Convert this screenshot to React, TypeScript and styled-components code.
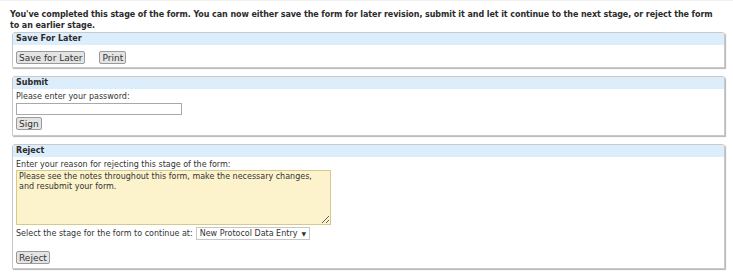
import styled, { createGlobalStyle } from 'styled-components'

const GlobalStyle = createGlobalStyle`
  html, body {
    margin: 0;
    padding: 0;
    background: #ffffff;
  }
  body {
    font-family: "DejaVu Sans", Verdana, sans-serif;
    font-size: 8px;
    color: #333333;
  }
`

const Page = styled.div`
  width: 733px;
  height: 276px;
  box-sizing: border-box;
  padding: 6px 6px 0 10px;
  border-top: 1px solid #f1f1f1;
  display: flex;
  flex-direction: column;
`

const Intro = styled.p`
  max-width: 706px;
  margin: 2px 0 1px;
  font-weight: bold;
  line-height: 11px;
  letter-spacing: -0.08px;
  color: #2b2b2b;
`

const Panel = styled.section`
  margin: 0 2px 8px 2px;
  border: 1px solid #c9c9c9;
  border-radius: 3px 3px 0 0;
  box-shadow: 1px 1px 1px #b5b5b5;
  background: #ffffff;
`

const PanelHeader = styled.h3`
  margin: 0;
  padding: 1px 3px;
  height: 10px;
  line-height: 10px;
  font-size: 8px;
  font-weight: bold;
  color: #2b2b2b;
  background: #dcedfc;
  border-radius: 2px 2px 0 0;
`

const PanelBody = styled.div<{ $pad?: string }>`
  padding: ${p => p.$pad ?? '4px 3px 4px'};
  display: flex;
  flex-direction: column;
  align-items: flex-start;
`

const Row = styled.div<{ $gap?: number }>`
  display: flex;
  align-items: center;
  gap: ${p => p.$gap ?? 14}px;
`

const Label = styled.label`
  display: block;
  line-height: 10px;
`

const Button = styled.button`
  font-family: inherit;
  font-size: 9px;
  color: #333333;
  padding: 1px 2px;
  height: 13px;
  line-height: 10px;
  background: #e4e4e4;
  border: 1px solid #9a9a9a;
  border-radius: 2px;
`

const PasswordInput = styled.input`
  box-sizing: border-box;
  width: 166px;
  height: 12px;
  margin: 1px 0 2px;
  border: 1px solid #a9a9a9;
  padding: 0 2px;
  font-family: inherit;
  font-size: 8px;
`

const Reason = styled.textarea`
  box-sizing: border-box;
  width: 315px;
  height: 55px;
  margin: 0 0 2px;
  padding: 1px 2px;
  resize: both;
  background: #fcf3cc;
  border: 1px solid #d6c98e;
  font-family: inherit;
  font-size: 8px;
  line-height: 10px;
  color: #333333;
`

const StageSelect = styled.div`
  display: inline-flex;
  align-items: center;
  gap: 4px;
  height: 11px;
  padding: 0 3px;
  border: 1px solid #c7c7c7;
  background: #ffffff;
  line-height: 11px;
`

const Caret = styled.span`
  font-size: 6px;
`

const Spacer = styled.div<{ $h: number }>`
  height: ${p => p.$h}px;
`

export default function App() {
  return (
    <>
      <GlobalStyle />
      <Page>
        <Intro>
          You've completed this stage of the form. You can now either save the form for later
          revision, submit it and let it continue to the next stage, or reject the form to an
          earlier stage.
        </Intro>

        <Panel>
          <PanelHeader>Save For Later</PanelHeader>
          <PanelBody $pad="6px 3px 3px">
            <Row>
              <Button>Save for Later</Button>
              <Button>Print</Button>
            </Row>
          </PanelBody>
        </Panel>

        <Panel>
          <PanelHeader>Submit</PanelHeader>
          <PanelBody $pad="3px 3px 5px">
            <Label>Please enter your password:</Label>
            <PasswordInput type="password" />
            <Button>Sign</Button>
          </PanelBody>
        </Panel>

        <Panel>
          <PanelHeader>Reject</PanelHeader>
          <PanelBody $pad="3px 3px 4px">
            <Label>Enter your reason for rejecting this stage of the form:</Label>
            <Reason
              defaultValue={
                'Please see the notes throughout this form, make the necessary changes,\nand resubmit your form.'
              }
            />
            <Row $gap={3}>
              <span>Select the stage for the form to continue at:</span>
              <StageSelect>
                New Protocol Data Entry <Caret>▼</Caret>
              </StageSelect>
            </Row>
            <Spacer $h={11} />
            <Button>Reject</Button>
          </PanelBody>
        </Panel>
      </Page>
    </>
  )
}
